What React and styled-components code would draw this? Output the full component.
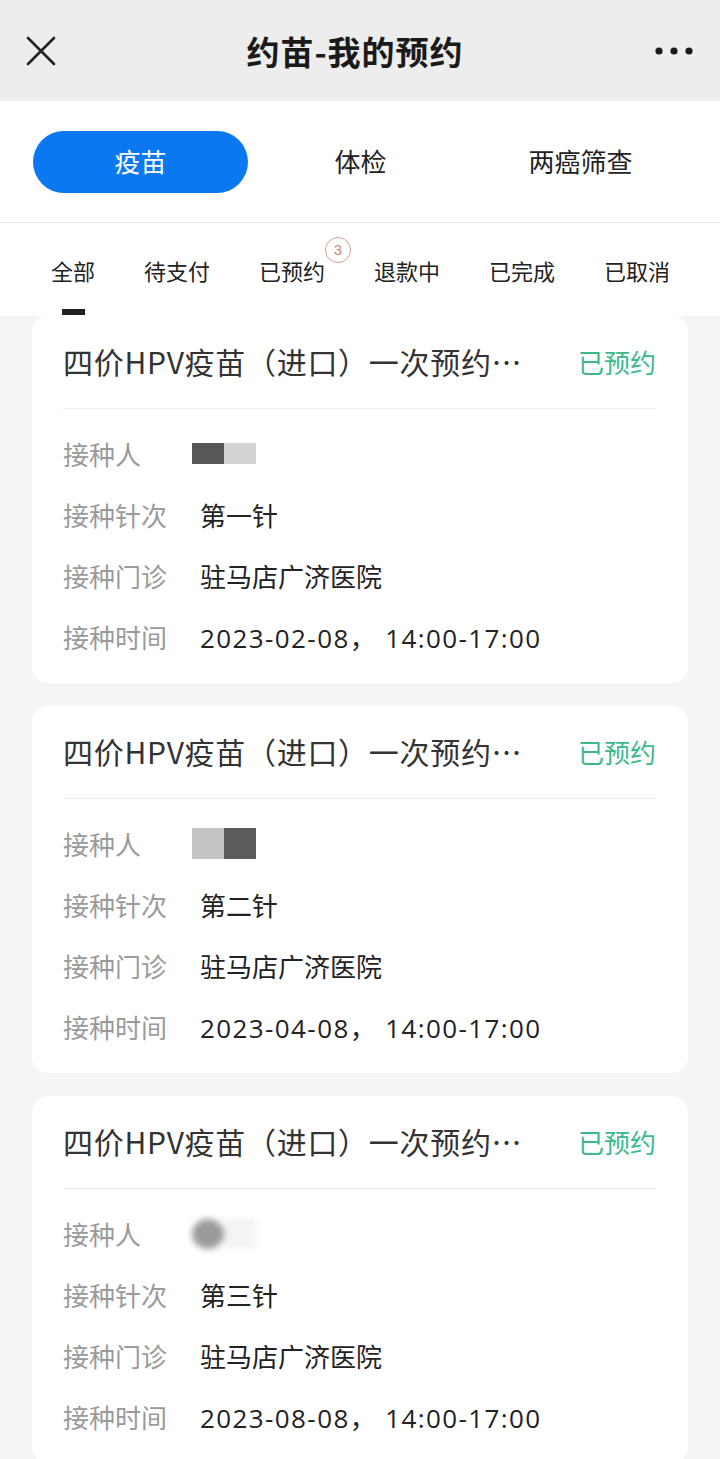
import React, { useState } from 'react';
import styled, { createGlobalStyle, css } from 'styled-components';

const GlobalStyle = createGlobalStyle`
  html, body {
    margin: 0;
    padding: 0;
    background: #f5f5f5;
    font-family: "Noto Sans CJK SC", "Noto Sans", sans-serif;
    color: #222;
  }
  * { box-sizing: border-box; }
`;

const Page = styled.div`
  width: 720px;
  min-height: 1459px;
  background: #f5f5f5;
  overflow: hidden;
`;

const NavBar = styled.div`
  height: 101px;
  background: #ededed;
  display: flex;
  align-items: center;
  justify-content: space-between;
  padding: 0 26px;
`;

const NavTitle = styled.div`
  font-size: 33px;
  font-weight: 700;
  color: #1a1a1a;
  letter-spacing: 1px;
  margin-right: 10px;
`;

const IconBtn = styled.div`
  width: 40px;
  height: 40px;
  display: flex;
  align-items: center;
  justify-content: ${p => (p.$right ? 'flex-end' : 'flex-start')};
`;

const Segment = styled.div`
  background: #fff;
  height: 122px;
  padding: 30px 30px 0;
  display: grid;
  grid-template-columns: repeat(3, 220px);
  align-items: start;
  border-bottom: 1px solid #e8e8e8;
`;

const SegItem = styled.div`
  height: 62px;
  width: 215px;
  margin-left: 3px;
  border-radius: 31px;
  display: flex;
  align-items: center;
  justify-content: center;
  font-size: 26px;
  color: #222;
  padding-bottom: 3px;
  ${p => p.$active && css`
    background: #0a78f0;
    color: #fff;
  `}
`;

const StatusBar = styled.div`
  background: #fff;
  height: 93px;
  display: flex;
  gap: 49px;
  padding: 32px 0 0 51px;
`;

const Tab = styled.div`
  position: relative;
  display: flex;
  flex-direction: column;
  align-items: center;
  font-size: 22px;
  line-height: 30px;
  color: #222;
`;

const Indicator = styled.div`
  width: 23px;
  height: 6px;
  margin-top: 24px;
  background: #1f1f1f;
`;

const Badge = styled.span`
  position: absolute;
  left: 66px;
  top: -18px;
  width: 26px;
  height: 26px;
  border-radius: 50%;
  border: 1px solid #d9a092;
  color: #c98a7b;
  font-size: 15px;
  line-height: 24px;
  text-align: center;
  font-family: "Liberation Sans", sans-serif;
`;

const List = styled.div`
  display: flex;
  flex-direction: column;
  gap: 23px;
  padding: 0 32px;
`;

const Card = styled.div`
  background: #fff;
  border-radius: 16px;
  padding: 0 32px 16px 31px;
`;

const CardHead = styled.div`
  height: 93px;
  display: flex;
  align-items: center;
  justify-content: space-between;
  border-bottom: 1px solid #ececec;
  padding-bottom: 2px;
`;

const CardTitle = styled.div`
  font-size: 30px;
  letter-spacing: 0.7px;
  color: #333;
  white-space: nowrap;
`;

const Status = styled.div`
  font-size: 26px;
  color: #3cb98a;
`;

const Rows = styled.div`
  padding-top: 14px;
`;

const Row = styled.div`
  display: flex;
  align-items: center;
  height: 61px;
`;

const Label = styled.div`
  width: 137px;
  font-size: 26px;
  color: #9a9a9a;
`;

const Value = styled.div`
  font-size: 26px;
  color: #222;
  ${p => p.$num && css`
    font-family: "Open Sans", "Noto Sans CJK SC", sans-serif;
    letter-spacing: 1.4px;
  `}
`;

const Blur = styled.div`
  display: flex;
  margin-left: -8px;
  height: ${p => p.$h}px;
  filter: blur(${p => p.$blur}px);
`;

const BlurPart = styled.div`
  width: 32px;
  height: 100%;
  background: ${p => p.$c};
  border-radius: ${p => (p.$round ? '50%' : '0')};
`;

const CloseIcon = () => (
  <svg width="30" height="30" viewBox="0 0 30 30">
    <path d="M2 2 L28 28 M28 2 L2 28" stroke="#222" strokeWidth="2.6" strokeLinecap="round" />
  </svg>
);

const MoreIcon = () => (
  <svg width="40" height="10" viewBox="0 0 40 10">
    <circle cx="5" cy="5" r="3.6" fill="#1a1a1a" />
    <circle cx="20" cy="5" r="3.6" fill="#1a1a1a" />
    <circle cx="35" cy="5" r="3.6" fill="#1a1a1a" />
  </svg>
);

const names = [
  { h: 21, blur: 0.6, parts: [{ c: '#575757' }, { c: '#d2d2d2' }] },
  { h: 31, blur: 0.6, parts: [{ c: '#c4c4c4' }, { c: '#5b5b5b' }] },
  { h: 30, blur: 3, parts: [{ c: '#9a9a9a', round: true }, { c: '#f4f4f4' }] },
];

const orders = [
  { dose: '第一针', time: '2023-02-08， 14:00-17:00' },
  { dose: '第二针', time: '2023-04-08， 14:00-17:00' },
  { dose: '第三针', time: '2023-08-08， 14:00-17:00' },
];

const segs = ['疫苗', '体检', '两癌筛查'];
const tabs = ['全部', '待支付', '已预约', '退款中', '已完成', '已取消'];

export default function App() {
  const [seg, setSeg] = useState(0);
  const [tab, setTab] = useState(0);

  return (
    <Page>
      <GlobalStyle />
      <NavBar>
        <IconBtn><CloseIcon /></IconBtn>
        <NavTitle>约苗-我的预约</NavTitle>
        <IconBtn $right><MoreIcon /></IconBtn>
      </NavBar>

      <Segment>
        {segs.map((s, i) => (
          <SegItem key={s} $active={i === seg} onClick={() => setSeg(i)}>{s}</SegItem>
        ))}
      </Segment>

      <StatusBar>
        {tabs.map((t, i) => (
          <Tab key={t} onClick={() => setTab(i)}>
            {t}
            {t === '已预约' && <Badge>3</Badge>}
            {i === tab && <Indicator />}
          </Tab>
        ))}
      </StatusBar>

      <List>
        {orders.map((o, i) => (
          <Card key={o.time}>
            <CardHead>
              <CardTitle>四价HPV疫苗（进口）一次预约…</CardTitle>
              <Status>已预约</Status>
            </CardHead>
            <Rows>
              <Row>
                <Label>接种人</Label>
                <Blur $h={names[i].h} $blur={names[i].blur}>
                  {names[i].parts.map((p, j) => (
                    <BlurPart key={j} $c={p.c} $round={p.round} />
                  ))}
                </Blur>
              </Row>
              <Row>
                <Label>接种针次</Label>
                <Value>{o.dose}</Value>
              </Row>
              <Row>
                <Label>接种门诊</Label>
                <Value>驻马店广济医院</Value>
              </Row>
              <Row>
                <Label>接种时间</Label>
                <Value $num>{o.time}</Value>
              </Row>
            </Rows>
          </Card>
        ))}
      </List>
    </Page>
  );
}
